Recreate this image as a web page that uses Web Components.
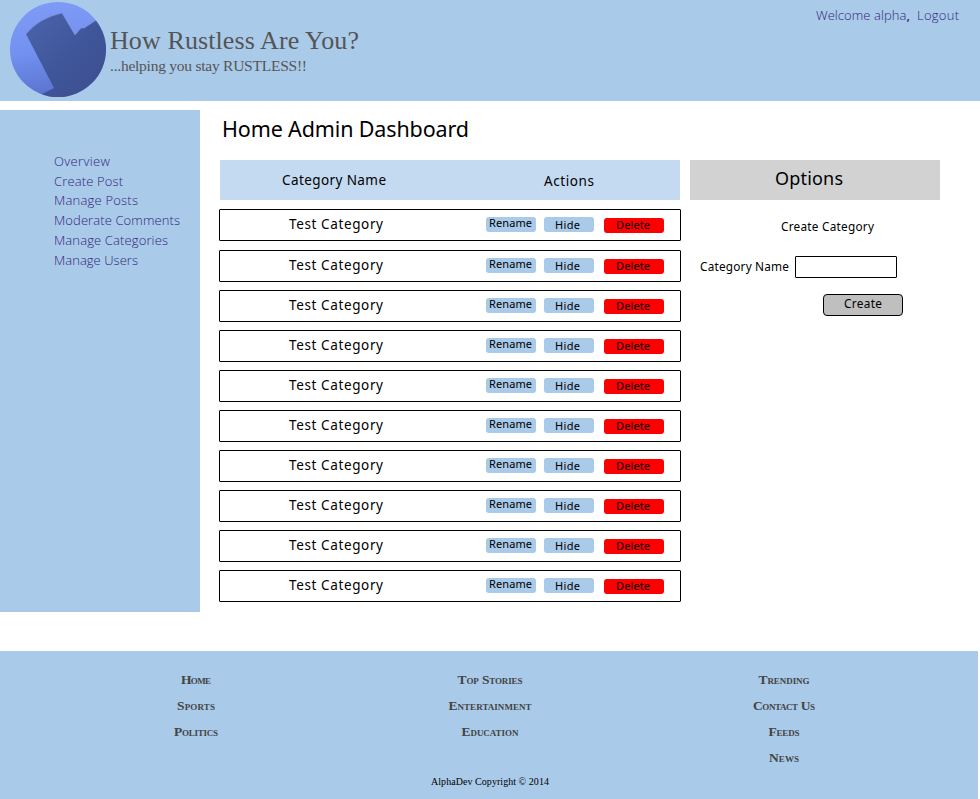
<!DOCTYPE html>
<html lang="en">
<head>
<meta charset="utf-8">
<title>How Rustless Are You?</title>
<style>
html, body { margin: 0; background: #fff; }
</style>
</head>
<body>
<admin-page></admin-page>
<script>
const define = (name, html, setup) => {
  const t = document.createElement('template');
  t.innerHTML = html;
  customElements.define(name, class extends HTMLElement {
    connectedCallback() {
      if (this.shadowRoot) return;
      this.attachShadow({ mode: 'open' }).append(t.content.cloneNode(true));
      if (setup) setup(this, this.shadowRoot);
    }
  });
};

/* A label tracked out to a fixed width; "base" is the distance from its top to the baseline. */
define('tracked-label', `<style>
:host { display: block; flex: none; white-space: pre; }
span { display: block; width: max-content; line-height: var(--lh); }
</style><span><slot></slot></span>`, (el, root) => {
  const size = +el.getAttribute('size'), base = +el.getAttribute('base');
  const asc = el.hasAttribute('serif') ? 0.3375 : 0.388;
  const lh = Math.round(2 * (base - asc * size));
  el.style.setProperty('--lh', lh + 'px');
  el.style.fontSize = size + 'px';
  el.style.height = lh + 'px';
  const w = +el.getAttribute('w'), s = root.querySelector('span');
  el.style.width = w + 'px';
  const natural = s.getBoundingClientRect().width;
  s.style.letterSpacing = ((w - natural) / Math.max(1, el.textContent.length - 1)).toFixed(3) + 'px';
});

define('brand-logo', `<style>:host { display: block; width: 96px; height: 96px; } svg { display: block; }</style>
<svg width="96" height="96" viewBox="10 1 96 96">
<defs>
<linearGradient id="l" x1="0.3" y1="0" x2="0.45" y2="1"><stop offset="0" stop-color="#7f9bf6"/><stop offset=".5" stop-color="#7391f0"/><stop offset="1" stop-color="#5871cc"/></linearGradient>
<linearGradient id="d" x1="0" y1="0" x2="1" y2="1"><stop offset="0" stop-color="#4a64ad"/><stop offset=".5" stop-color="#40569a"/><stop offset="1" stop-color="#3b4c8c"/></linearGradient>
<clipPath id="c"><ellipse cx="58" cy="49.5" rx="48" ry="47.5"/></clipPath>
</defs>
<g clip-path="url(#c)">
<rect x="10" y="1" width="96" height="97" fill="url(#l)"/>
<path d="M26 34Q39 18 62 13L75 35L81 28L84 28L98 19L110 19V100H38L42 94L54 88Z" fill="url(#d)"/>
<path d="M26 34Q39 18 62 13L75 35L81 28L84 28L98 19" fill="none" stroke="#8196dc" stroke-width=".6"/>
</g></svg>`);

define('site-header', `<style>
:host { display: flex; height: 101px; background: #a9cae9; box-sizing: border-box; padding: 1px 21px 0 10px; color: #555; font-family: "Liberation Serif", serif; }
.t { flex: 1; padding: 23px 0 0 4px; }
.user { display: flex; gap: 7px; color: #33267a; font-family: "Open Sans", sans-serif; font-weight: 300; padding-top: 5px; }
b { font-weight: 600; }
</style><brand-logo></brand-logo>
<div class="t"><tracked-label serif size="26" base="26" w="249">How Rustless Are You?</tracked-label>
<tracked-label serif size="15.5" base="13" w="197">...helping you stay RUSTLESS!!</tracked-label></div>
<div class="user"><tracked-label size="13" base="14" w="94">Welcome alpha<b>,</b></tracked-label><tracked-label size="13" base="14" w="42">Logout</tracked-label></div>`);

define('side-nav', `<style>
:host { display: grid; grid-template-rows: 20px 19px 20px 20px 20px 20px; width: 200px; height: 502px; box-sizing: border-box; background: #a9cae9; padding: 42px 0 0 54px; color: #33267a; font-family: "Open Sans", sans-serif; font-weight: 300; }
</style>
<tracked-label size="13" base="14" w="56">Overview</tracked-label>
<tracked-label size="13" base="14" w="69">Create Post</tracked-label>
<tracked-label size="13" base="14" w="84">Manage Posts</tracked-label>
<tracked-label size="13" base="14" w="126">Moderate Comments</tracked-label>
<tracked-label size="13" base="14" w="114">Manage Categories</tracked-label>
<tracked-label size="13" base="14" w="84">Manage Users</tracked-label>`);

define('action-button', `<style>
:host { display: flex; justify-content: center; box-sizing: border-box; width: 50px; height: 15px; border-radius: 3px; background: #a9cae9; }
:host([kind=delete]) { width: 60px; background: #f00; margin: 1px 0 0 2px; padding-right: 2px; }
:host([kind=rename]) { padding-right: 1px; }
:host([kind=hide]) { padding-right: 3px; }
</style><slot></slot>`);

define('category-row', `<style>
:host { display: flex; box-sizing: border-box; width: 462px; height: 32px; border: 1px solid #000; border-radius: 1px; padding-left: 69px; }
.n { padding-top: 4px; width: 197px; }
.a { display: flex; align-items: flex-start; gap: 8px; padding-top: 7px; }
</style><div class="n"><tracked-label size="13.5" base="15" w="94">Test Category</tracked-label></div>
<div class="a"><action-button kind="rename"><tracked-label size="11" base="10" w="43">Rename</tracked-label></action-button>
<action-button kind="hide"><tracked-label size="11" base="12" w="25">Hide</tracked-label></action-button>
<action-button kind="delete"><tracked-label size="11" base="11" w="34">Delete</tracked-label></action-button></div>`);

define('category-table', `<style>
:host { display: block; width: 462px; }
.h { display: flex; margin: 0 1px 9px; height: 40px; background: #c4daf1; padding-left: 62px; box-sizing: border-box; }
.h > :first-child { margin: 9px 158px 0 0; }
.h > :last-child { margin-top: 10px; }
.rows { display: grid; gap: 8px; }
.rows > :first-child { margin-bottom: 1px; }
</style><div class="h"><tracked-label size="13.5" base="16" w="104">Category Name</tracked-label><tracked-label size="13.5" base="16" w="50">Actions</tracked-label></div>
<div class="rows"></div>`, (el, root) => {
  root.querySelector('.rows').innerHTML = '<category-row></category-row>'.repeat(10);
});

define('options-panel', `<style>
:host { display: block; width: 250px; }
.h { display: flex; height: 40px; background: #d2d2d2; padding: 5px 0 0 85px; box-sizing: border-box; }
.c { padding: 17px 0 0 91px; height: 56px; box-sizing: border-box; }
.f { display: flex; gap: 6px; padding-left: 10px; }
.f tracked-label { margin-top: 1px; }
input { box-sizing: border-box; width: 102px; height: 22px; border: 1px solid #000; border-radius: 1px; background: #fff; padding: 0; margin: 0; }
button { display: flex; justify-content: center; align-items: flex-start; box-sizing: border-box; width: 80px; height: 22px; margin: 16px 0 0 133px; padding: 0; border: 1px solid #000; border-radius: 4px; background: #bfbfbf; font-family: inherit; color: #000; }
</style><div class="h"><tracked-label size="18" base="20" w="68">Options</tracked-label></div>
<div class="c"><tracked-label size="11.8" base="14" w="93">Create Category</tracked-label></div>
<div class="f"><tracked-label size="11.8" base="14" w="89">Category Name</tracked-label><input type="text" aria-label="Category Name"></div>
<button type="button"><tracked-label size="11.8" base="13" w="38">Create</tracked-label></button>`);

define('site-footer', `<style>
:host { display: block; width: 978px; height: 148px; background: #a9cae9; box-sizing: border-box; padding: 19px 0 0 49px; font-family: "Liberation Serif", serif; }
.g { display: grid; grid-template-columns: repeat(3, 294px); height: 104px; color: #444; font-weight: bold; font-variant: small-caps; }
.g div { display: grid; grid-auto-rows: 26px; justify-items: center; align-content: start; }
.cp { display: flex; justify-content: center; width: 882px; }
</style><div class="g">
<div><tracked-label serif size="13.5" base="14" w="30">Home</tracked-label><tracked-label serif size="13.5" base="14" w="38">Sports</tracked-label><tracked-label serif size="13.5" base="14" w="44">Politics</tracked-label></div>
<div><tracked-label serif size="13.5" base="14" w="65">Top Stories</tracked-label><tracked-label serif size="13.5" base="14" w="83">Entertainment</tracked-label><tracked-label serif size="13.5" base="14" w="57">Education</tracked-label></div>
<div><tracked-label serif size="13.5" base="14" w="51">Trending</tracked-label><tracked-label serif size="13.5" base="14" w="62">Contact Us</tracked-label><tracked-label serif size="13.5" base="14" w="31">Feeds</tracked-label><tracked-label serif size="13.5" base="14" w="30">News</tracked-label></div>
</div><div class="cp"><tracked-label serif size="10" base="11" w="118">AlphaDev Copyright © 2014</tracked-label></div>`);

define('admin-page', `<style>
:host { display: block; width: 980px; height: 799px; overflow: hidden; font-family: "Noto Sans", sans-serif; color: #000; }
.m { display: flex; margin: 9px 0 39px; height: 502px; }
.content { padding: 4px 0 0 19px; }
.title { padding-left: 3px; height: 46px; }
.cols { display: flex; gap: 9px; }
</style><site-header></site-header>
<div class="m"><side-nav></side-nav><div class="content">
<div class="title"><tracked-label size="21.5" base="23" w="247">Home Admin Dashboard</tracked-label></div>
<div class="cols"><category-table></category-table><options-panel></options-panel></div>
</div></div>
<site-footer></site-footer>`);
</script>
</body>
</html>
